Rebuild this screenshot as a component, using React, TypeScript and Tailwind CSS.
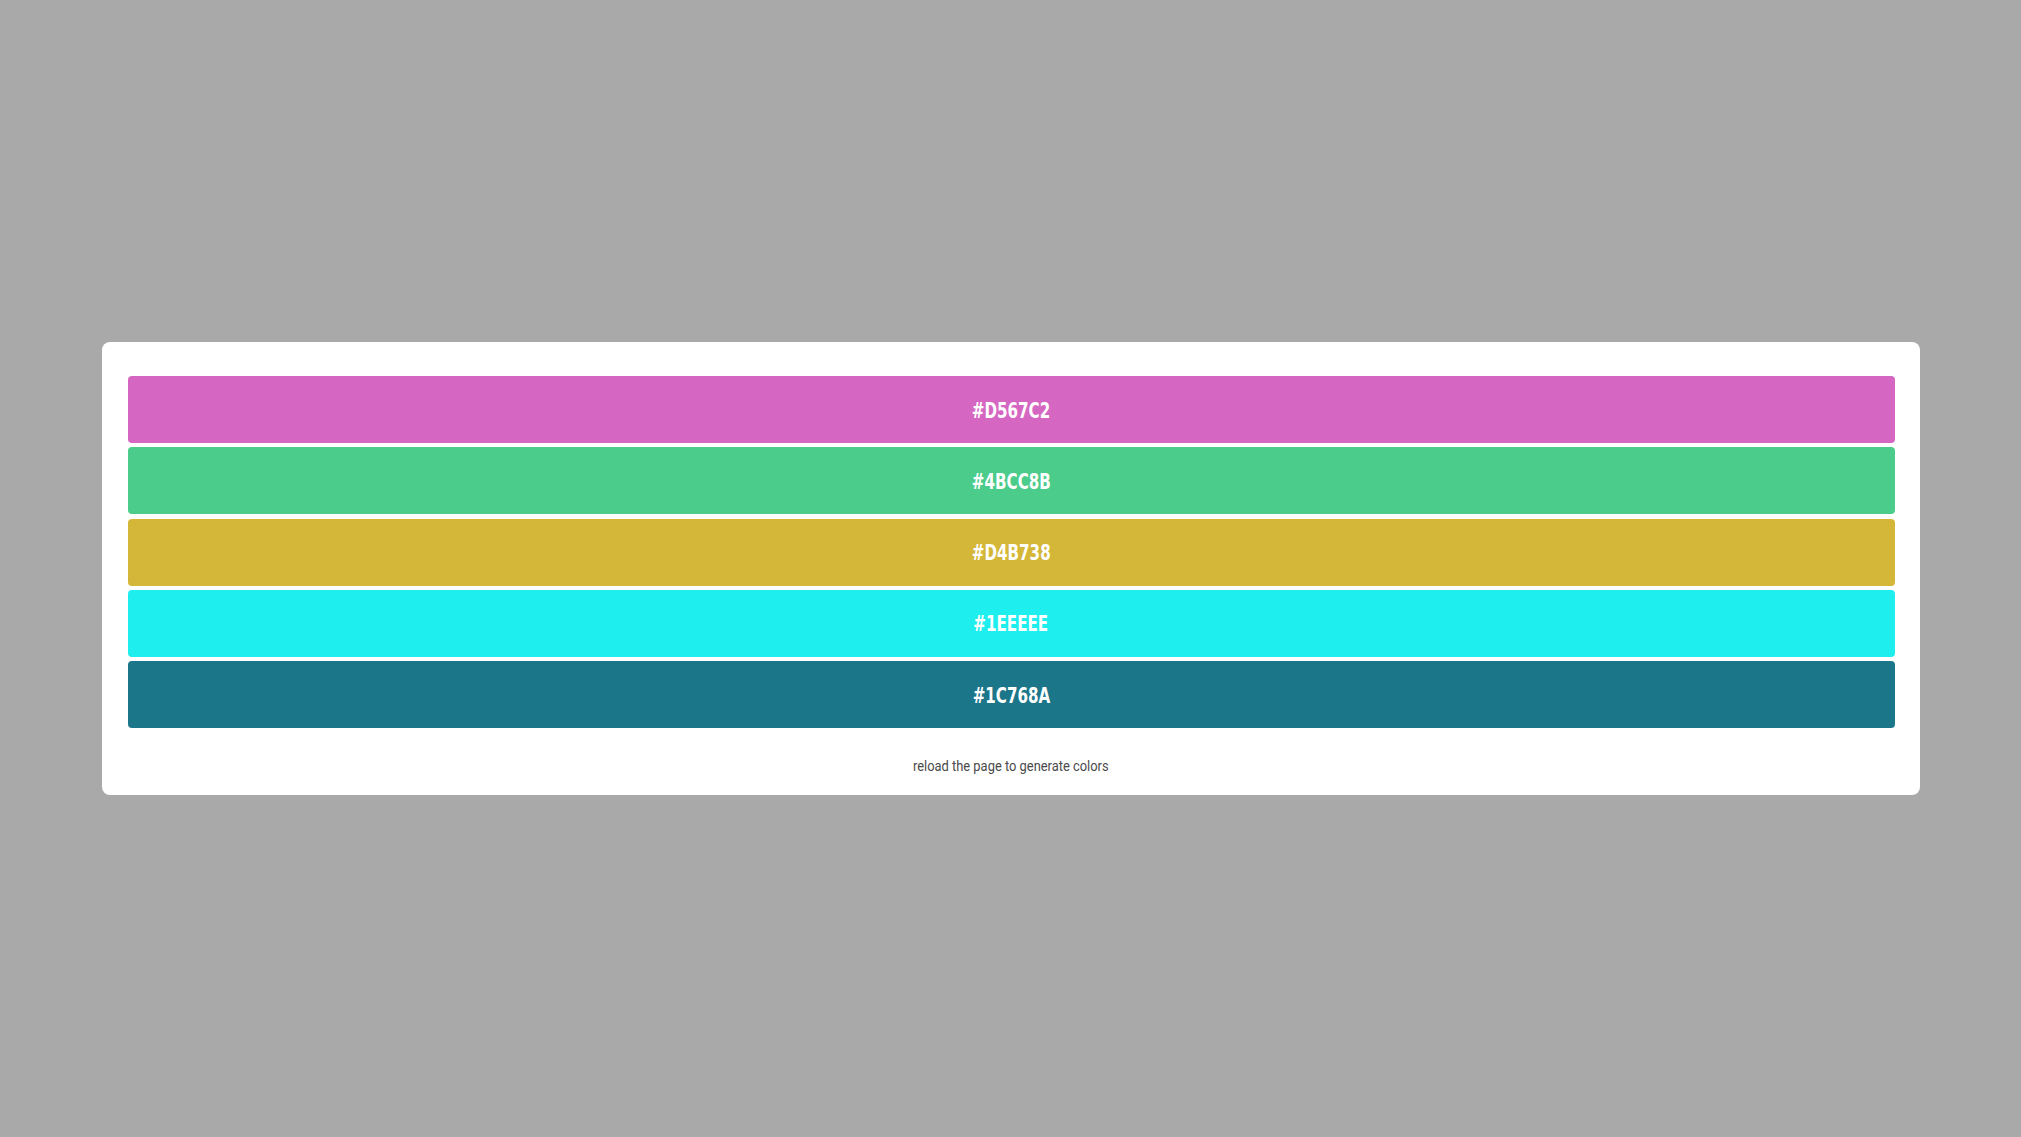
import React from "react";

const colors = ["#D567C2", "#4BCC8B", "#D4B738", "#1EEEEE", "#1C768A"];

const App: React.FC = () => {
  return (
    <div
      className="min-h-screen w-full bg-[#a9a9a9] flex items-center justify-center"
      style={{ fontFamily: '"DejaVu Sans Condensed", "Roboto", sans-serif' }}
    >
      <div className="w-[1818px] bg-white rounded-lg pt-[34px] pb-[19px] pl-[26px] pr-[25px]">
        <div className="flex flex-col gap-[4.25px]">
          {colors.map((c) => (
            <div
              key={c}
              className="h-[67px] rounded-[4px] flex items-center justify-center pt-[3px]"
              style={{ backgroundColor: c }}
            >
              <span className="inline-block scale-x-[0.8] text-white font-bold text-[21px] leading-none">
                {c}
              </span>
            </div>
          ))}
        </div>
        <p
          className="mt-[28px] h-[20px] leading-[20px] text-center text-[15px] text-[#4a4a4a]"
          style={{ fontFamily: "Roboto, sans-serif" }}
        >
          <span className="inline-block scale-x-[0.86]">
            reload the page to generate colors
          </span>
        </p>
      </div>
    </div>
  );
};

export default App;
